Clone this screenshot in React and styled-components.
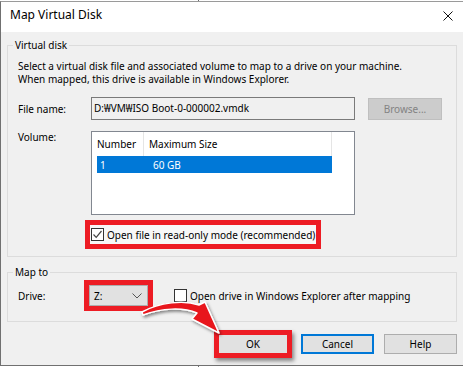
import React from 'react';
import styled, { createGlobalStyle } from 'styled-components';

const GlobalStyle = createGlobalStyle`
  html, body { margin: 0; padding: 0; background: #fff; }
  body { font-family: "Noto Sans", "Segoe UI", sans-serif; }
  * { box-sizing: border-box; }
`;

const Screen = styled.div`
  position: relative;
  width: 463px;
  height: 367px;
  overflow: hidden;
  padding-top: 1px;
  background:
    linear-gradient(to right, transparent 198px, #6d6d6d 198px, #6d6d6d 199px, transparent 199px),
    #fff;
`;

const Window = styled.div`
  position: relative;
  width: 463px;
  height: 365px;
  display: flex;
  flex-direction: column;
  border-top: 1px solid #9a9a9a;
  border-left: 1px solid #707070;
  border-bottom: 1px solid #707070;
  background: #f0f0f0;
  font-size: 10px;
  line-height: 12px;
  color: #000;
`;

const TitleBar = styled.div`
  height: 30px;
  flex: none;
  display: flex;
  justify-content: space-between;
  align-items: flex-start;
  background: #fff;
  padding: 4px 10px 0 9px;
`;

const Title = styled.div`
  font-size: 12px;
  line-height: 17px;
`;

const CloseIcon = styled.svg`
  margin-top: 5px;
  width: 10px;
  height: 10px;
`;

const Body = styled.div`
  flex: 1;
  display: flex;
  flex-direction: column;
  padding: 7px 6px 0 6px;
`;

const Group = styled.fieldset`
  margin: ${p => p.$gap || 0}px 0 0 0;
  padding: 0;
  min-width: 0;
  border: 1px solid #dcdcdc;
`;

const Legend = styled.legend`
  margin-left: 5px;
  padding: 0 2px;
  font-size: 10px;
  line-height: 12px;
`;

const GroupInner = styled.div`
  display: flex;
  flex-direction: column;
  padding: ${p => p.$pad};
`;

const Desc = styled.p`
  margin: 0;
  line-height: 13px;
`;

const FormRow = styled.div`
  display: flex;
  align-items: ${p => p.$align || 'center'};
  margin-top: ${p => p.$mt || 0}px;
`;

const Label = styled.div`
  width: ${p => p.$w}px;
  flex: none;
`;

const TextField = styled.div`
  width: 264px;
  height: 23px;
  border: 1px solid #7a7a7a;
  background: #f0f0f0;
  padding-left: 2px;
  line-height: 21px;
  white-space: nowrap;
`;

const Button = styled.div`
  width: ${p => p.$w || 73}px;
  height: ${p => p.$h || 20}px;
  margin-left: ${p => p.$ml || 0}px;
  display: flex;
  align-items: center;
  justify-content: center;
  background: ${p => (p.$disabled ? '#cccccc' : '#e1e1e1')};
  border: ${p => (p.$default ? '2px solid #0078d7' : p.$bare ? 'none' : `1px solid ${p.$disabled ? '#bfbfbf' : '#adadad'}`)};
  color: ${p => (p.$disabled ? '#838383' : '#000')};
  flex: none;
`;

const ListBox = styled.div`
  width: 264px;
  height: 84px;
  border: 1px solid #828790;
  background: #fff;
`;

const ListHeader = styled.div`
  display: flex;
  height: 24px;
`;

const HeaderCell = styled.div`
  width: ${p => p.$w}px;
  display: flex;
  align-items: center;
  padding-left: 5px;
  border-right: 1px solid #e5e5e5;
`;

const ListRow = styled.div`
  display: flex;
  align-items: center;
  margin-left: 5px;
  width: 235px;
  height: 17px;
  background: ${p => (p.$selected ? '#0078d7' : 'transparent')};
  color: ${p => (p.$selected ? '#fff' : '#000')};
`;

const RowCell = styled.div`
  width: ${p => p.$w}px;
  padding-left: 3px;
`;

const Highlight = styled.div`
  flex: none;
  align-self: flex-start;
  border: 5px solid #ed1c24;
  margin: ${p => p.$m || 0};
  box-shadow: ${p => (p.$shadow ? '2px 3px 4px rgba(0,0,0,0.45)' : 'none')};
`;

const CheckLine = styled.div`
  display: flex;
  align-items: center;
  width: ${p => p.$w || 'auto'};
  height: ${p => p.$h || 'auto'};
  padding-left: ${p => p.$pl || 0}px;
  margin-left: ${p => p.$ml || 0}px;
  background: ${p => p.$bg || 'transparent'};
  white-space: nowrap;
`;

const Box = styled.span`
  width: 13px;
  height: 13px;
  flex: none;
  border: 1px solid #333;
  background: #fff;
  display: flex;
  align-items: center;
  justify-content: center;
  margin-right: 3px;
`;

const Combo = styled.div`
  width: 59px;
  height: 21px;
  border: 1px solid #adadad;
  background: #e1e1e1;
  display: flex;
  align-items: center;
  justify-content: space-between;
  padding: 0 5px 0 4px;
`;

const ButtonRow = styled.div`
  display: flex;
  justify-content: flex-end;
  align-items: center;
  margin-top: 8px;
`;

const ArrowLayer = styled.svg`
  position: absolute;
  left: -1px;
  top: -2px;
  width: 463px;
  height: 367px;
  pointer-events: none;
`;

function CheckBox({ checked }) {
  return (
    <Box>
      {checked && (
        <svg width="11" height="11" viewBox="0 0 11 11">
          <path d="M1.5 5.5 L4.2 8.3 L9.5 2" fill="none" stroke="#444" strokeWidth="1.2" />
        </svg>
      )}
    </Box>
  );
}

export default function App() {
  return (
    <>
      <GlobalStyle />
      <Screen>
        <Window>
          <TitleBar>
            <Title>Map Virtual Disk</Title>
            <CloseIcon viewBox="0 0 10 10">
              <path d="M0.5 0.5 L9.5 9.5 M9.5 0.5 L0.5 9.5" stroke="#111" strokeWidth="1" />
            </CloseIcon>
          </TitleBar>
          <Body>
            <Group>
              <Legend>Virtual disk</Legend>
              <GroupInner $pad="9px 7px 7px 10px">
                <Desc>
                  Select a virtual disk file and associated volume to map to a drive on your machine.
                  <br />
                  When mapped, this drive is available in Windows Explorer.
                </Desc>
                <FormRow $mt={11}>
                  <Label $w={73}>File name:</Label>
                  <TextField>D:₩VM₩ISO Boot-0-000002.vmdk</TextField>
                  <Button $disabled $w={74} $h={22} $ml={13}>Browse...</Button>
                </FormRow>
                <FormRow $mt={11} $align="flex-start">
                  <Label $w={73}>Volume:</Label>
                  <ListBox>
                    <ListHeader>
                      <HeaderCell $w={52}>Number</HeaderCell>
                      <HeaderCell $w={188}>Maximum Size</HeaderCell>
                    </ListHeader>
                    <ListRow $selected>
                      <RowCell $w={53}>1</RowCell>
                      <RowCell $w={180}>60 GB</RowCell>
                    </ListRow>
                  </ListBox>
                </FormRow>
                <Highlight $m="5px 0 0 67px">
                  <CheckLine $w="226px" $h="19px" $pl={1} $bg="#f7f7f7">
                    <CheckBox checked />
                    Open file in read-only mode (recommended)
                  </CheckLine>
                </Highlight>
              </GroupInner>
            </Group>
            <Group $gap={9}>
              <Legend>Map to</Legend>
              <GroupInner $pad="2px 7px 10px 10px">
                <FormRow>
                  <Label $w={66}>Drive:</Label>
                  <Highlight>
                    <Combo>
                      <span>Z:</span>
                      <svg width="10" height="6" viewBox="0 0 10 6">
                        <path d="M0.5 0.5 L5 5 L9.5 0.5" fill="none" stroke="#555" strokeWidth="1" />
                      </svg>
                    </Combo>
                  </Highlight>
                  <CheckLine $ml={21}>
                    <CheckBox />
                    Open drive in Windows Explorer after mapping
                  </CheckLine>
                </FormRow>
              </GroupInner>
            </Group>
            <ButtonRow>
              <Highlight $shadow>
                <Button $bare $w={68} $h={18}>OK</Button>
              </Highlight>
              <Button $default $ml={9}>Cancel</Button>
              <Button $ml={10}>Help</Button>
            </ButtonRow>
          </Body>
          <ArrowLayer viewBox="0 0 463 367">
            <defs>
              <filter id="sh" x="-20%" y="-20%" width="160%" height="160%">
                <feDropShadow dx="1.5" dy="2" stdDeviation="1.5" floodColor="#000" floodOpacity="0.45" />
              </filter>
            </defs>
            <path
              d="M142 312 C160 302 184 300 199 305 L205 302 L219 333 L192 319 L197 313 C183 307 162 308 143 315 Z"
              fill="#e8141b"
              stroke="#fff"
              strokeWidth="1.5"
              strokeLinejoin="round"
              filter="url(#sh)"
            />
          </ArrowLayer>
        </Window>
      </Screen>
    </>
  );
}
